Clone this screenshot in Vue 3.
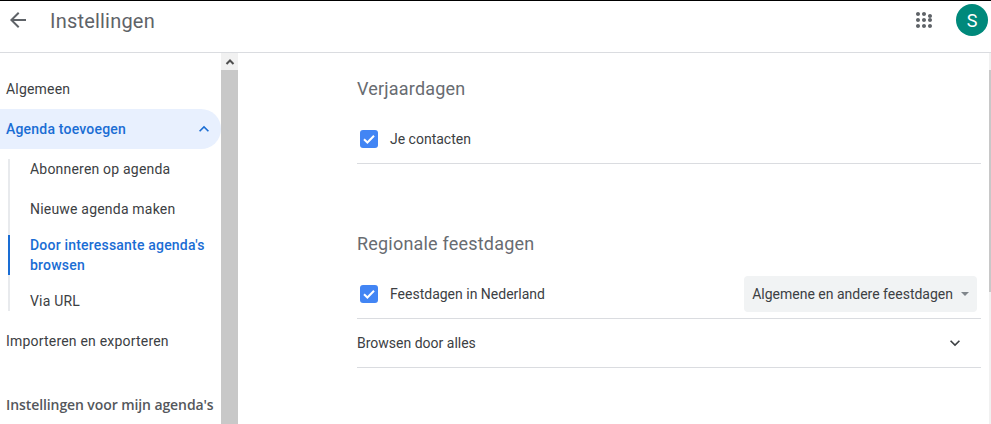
<script setup>
const subItems = [
  { label: 'Abonneren op agenda', active: false },
  { label: 'Nieuwe agenda maken', active: false },
  { label: "Door interessante agenda's browsen", active: true },
  { label: 'Via URL', active: false }
]
</script>

<template>
  <div class="page">
    <header class="top">
      <svg class="back" width="24" height="24" viewBox="0 0 24 24"><path fill="#5f6368" d="M20 11H7.830l5.590-5.590L12 4l-8 8 8 8 1.410-1.410L7.830 13H20v-2z"/></svg>
      <h1 class="title">Instellingen</h1>
      <span class="spacer"></span>
      <svg class="apps" width="24" height="24" viewBox="0 0 24 24"><path fill="#5f6368" d="M6 8c1.100 0 2-.9 2-2s-.9-2-2-2-2 .9-2 2 .9 2 2 2zm6 12c1.100 0 2-.9 2-2s-.9-2-2-2-2 .9-2 2 .9 2 2 2zm-6 0c1.100 0 2-.9 2-2s-.9-2-2-2-2 .9-2 2 .9 2 2 2zm0-6c1.100 0 2-.9 2-2s-.9-2-2-2-2 .9-2 2 .9 2 2 2zm6 0c1.100 0 2-.9 2-2s-.9-2-2-2-2 .9-2 2 .9 2 2 2zm6-8c-1.100 0-2 .9-2 2s.9 2 2 2 2-.9 2-2-.9-2-2-2zm-6 2c1.100 0 2-.9 2-2s-.9-2-2-2-2 .9-2 2 .9 2 2 2zm6 6c1.100 0 2-.9 2-2s-.9-2-2-2-2 .9-2 2 .9 2 2 2zm0 6c1.100 0 2-.9 2-2s-.9-2-2-2-2 .9-2 2 .9 2 2 2z"/></svg>
      <div class="avatar">S</div>
    </header>
    <div class="body">
      <aside class="side">
        <nav class="nav">
          <div class="item">Algemeen</div>
          <div class="item open">
            <span>Agenda toevoegen</span>
            <svg width="20" height="20" viewBox="0 0 24 24"><path fill="#1a6dd4" d="M12 8l-6 6 1.410 1.410L12 10.830l4.590 4.580L18 14z"/></svg>
          </div>
          <div class="subs">
            <div v-for="s in subItems" :key="s.label" class="sub" :class="{ active: s.active }">{{ s.label }}</div>
          </div>
          <div class="item">Importeren en exporteren</div>
          <div class="heading">Instellingen voor mijn agenda's</div>
        </nav>
        <div class="bar">
          <div class="bar-btn"><svg width="12" height="12" viewBox="0 0 12 12"><path fill="none" stroke="#505050" stroke-width="2" d="M2.500 8 6 4.500 9.500 8"/></svg></div>
          <div class="bar-thumb"></div>
        </div>
      </aside>
      <main class="main">
        <section class="sec">
          <h2>Verjaardagen</h2>
          <div class="row check-row">
            <span class="check"><svg width="18" height="18" viewBox="0 0 18 18"><path fill="none" stroke="#fff" stroke-width="2" d="M4 9.200l3.400 3.300L14 5.800"/></svg></span>
            <span>Je contacten</span>
          </div>
        </section>
        <section class="sec second">
          <h2>Regionale feestdagen</h2>
          <div class="row check-row">
            <span class="check"><svg width="18" height="18" viewBox="0 0 18 18"><path fill="none" stroke="#fff" stroke-width="2" d="M4 9.200l3.400 3.300L14 5.800"/></svg></span>
            <span>Feestdagen in Nederland</span>
            <span class="spacer"></span>
            <div class="select">
              <span>Algemene en andere feestdagen</span>
              <i class="caret"></i>
            </div>
          </div>
          <div class="row browse">
            <span>Browsen door alles</span>
            <span class="spacer"></span>
            <svg width="20" height="20" viewBox="0 0 24 24"><path fill="#3c4043" d="M16.590 8.590 12 13.170 7.410 8.590 6 10l6 6 6-6z"/></svg>
          </div>
        </section>
      </main>
      <div class="page-bar"><div class="page-thumb"></div></div>
    </div>
  </div>
</template>

<style>
html, body { margin: 0; overflow: hidden; background: #fff; }
</style>

<style scoped>
.page {
  width: 991px;
  height: 424px;
  overflow: hidden;
  background: #fff;
  font-family: Roboto, "Liberation Sans", sans-serif;
  font-size: 14px;
  color: #3c4043;
  display: flex;
  flex-direction: column;
  box-sizing: border-box;
  border-top: 1px solid #000;
}
.top {
  height: 52px;
  flex: none;
  box-sizing: border-box;
  border-bottom: 1px solid #dadce0;
  display: flex;
  align-items: center;
  padding: 0 3px 13px 6px;
}
.back { flex: none; }
.title {
  margin: 2px 0 0 20px;
  font-size: 20px;
  font-weight: 400;
  color: #5f6368;
  letter-spacing: 0.2px;
}
.spacer { flex: 1; }
.apps { margin-right: 20px; }
.avatar {
  width: 32px;
  height: 32px;
  border-radius: 50%;
  background: #00897b;
  color: #fff;
  font-size: 18px;
  display: flex;
  align-items: center;
  justify-content: center;
}
.body { flex: 1; display: flex; min-height: 0; }
.side { width: 238px; flex: none; display: flex; }
.nav { width: 221px; flex: none; padding-top: 16px; letter-spacing: 0.2px; }
.item {
  height: 40px;
  display: flex;
  align-items: center;
  justify-content: space-between;
  padding: 0 7px 0 6px;
  box-sizing: border-box;
}
.item.open {
  background: #e8f0fe;
  color: #1a6dd4;
  font-weight: 500;
  border-radius: 0 20px 20px 0;
}
.subs {
  margin: 10px 0 10px 8px;
  border-left: 2px solid #e8eaed;
  display: flex;
  flex-direction: column;
  gap: 16px;
}
.sub {
  padding: 0 10px 0 20px;
  line-height: 20px;
}
.sub:nth-child(2) { margin-top: 4px; }
.sub.active {
  color: #1a6dd4;
  font-weight: 500;
  margin-left: -2px;
  border-left: 2px solid #1a6dd4;
}
.heading {
  margin-top: 34px;
  padding-left: 6px;
  font-family: "Open Sans", Roboto, sans-serif;
  font-size: 14px;
  font-weight: 600;
  line-height: 20px;
  letter-spacing: -0.09px;
  color: #54575c;
  white-space: nowrap;
}
.bar { width: 17px; flex: none; display: flex; flex-direction: column; }
.bar-btn { height: 17px; background: #f1f1f1; display: flex; align-items: center; justify-content: center; }
.bar-thumb { flex: 1; background: #c8c8c8; }
.main { flex: 1; padding: 0 8px 0 119px; min-width: 0; }
h2 {
  margin: 0;
  font-size: 18px;
  font-weight: 400;
  color: #686c71;
  line-height: 24px;
  letter-spacing: 0.2px;
}
.sec { padding-top: 24px; }
.sec.second { padding-top: 68px; }
.row { display: flex; align-items: center; border-bottom: 1px solid #dadce0; box-sizing: border-box; }
.check-row { height: 63px; padding: 14px 4px 0 3px; }
.check {
  width: 18px;
  height: 18px;
  border-radius: 3px;
  background: #4285f4;
  margin-right: 12px;
  flex: none;
  display: flex;
}
.select {
  height: 36px;
  background: #f1f3f4;
  border-radius: 4px;
  display: flex;
  align-items: center;
  padding: 0 8px;
}
.caret {
  margin-left: 8px;
  width: 0;
  height: 0;
  border-left: 4px solid transparent;
  border-right: 4px solid transparent;
  border-top: 4px solid #80868b;
}
.browse { height: 49px; padding-right: 16px; }
.page-bar { width: 2px; flex: none; background: #f1f1f1; padding-top: 17px; }
.page-thumb { height: 222px; background: #c8c8c8; }
</style>
